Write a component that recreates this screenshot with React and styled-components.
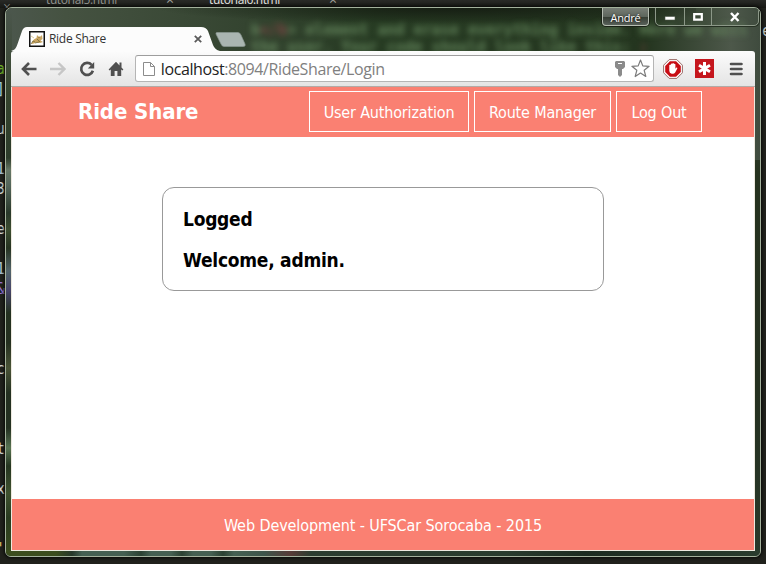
import React from "react";
import styled, { createGlobalStyle } from "styled-components";

const Global = createGlobalStyle`
  * { box-sizing: border-box; }
  html, body { margin: 0; padding: 0; overflow: hidden; background: #20211c; }
`;

const ui = `"DejaVu Sans Condensed", "DejaVu Sans", sans-serif`;
const segoe = `"Open Sans", "Noto Sans", sans-serif`;

const Desktop = styled.div`
  position: relative;
  width: 766px;
  height: 564px;
  overflow: hidden;
  background: #20211c;
`;

const EditorTabs = styled.div`
  display: flex;
  height: 8px;
  overflow: hidden;
  background: linear-gradient(#292a27, #171814);
  padding-left: 3px;
`;

const EditorTab = styled.div`
  display: flex;
  flex: none;
  align-items: center;
  justify-content: space-between;
  width: ${(p) => p.$width}px;
  height: 14px;
  margin-top: -7px;
  padding-left: ${(p) => p.$indent}px;
  font: 12px/14px ${segoe};
  letter-spacing: -0.4px;
  color: ${(p) => (p.$active ? "#e6e6e2" : "#92938e")};
`;

const EditorClose = styled.span`
  width: 10px;
  color: #a0a09a;
  font-size: 14px;
`;

const EditorLines = styled.div`
  padding-top: 51px;
  width: 12px;
  overflow: hidden;
  font: 15px/20px "DejaVu Sans Mono", monospace;
`;

const EditorLine = styled.div`
  height: 20px;
  margin-left: -4px;
  color: ${(p) => p.$color || "#d5d6d0"};
`;

const EditorOverflow = styled.div`
  position: absolute;
  left: 753px;
  top: 21px;
  font: 15px/20px "DejaVu Sans Mono", monospace;
  color: #bfc6c6;
`;

const Window = styled.div`
  position: absolute;
  left: 5px;
  top: 7px;
  width: 756px;
  height: 550px;
  border: 1px solid #a3b19c;
  border-radius: 7px 7px 6px 6px;
  padding: 0 5px 5px;
  background: linear-gradient(#485347 0, #3a4838 9%, #26321f 30%, #253020 70%, #29382a 100%);
  box-shadow: 0 0 3px 1px #080907;
  overflow: hidden;
`;

const Glass = styled.div`
  position: absolute;
  inset: 0;
  overflow: hidden;
  background: linear-gradient(90deg, #4c574d 0, #455241 60px, #344430 240px, #263a22 370px, #24351f 640px, #4d584a 725px, #3f4b3e 100%) top / 100% 152px no-repeat;
`;

const GlassShade = styled.div`
  height: 16px;
  margin-left: 90px;
  width: 600px;
  background: radial-gradient(ellipse 50% 100% at 60% 0, #161e13, transparent);
`;

const GlassText = styled.div`
  margin-top: ${(p) => p.$gap}px;
  padding-left: ${(p) => p.$indent}px;
  white-space: pre;
  font: bold 15px/17px "DejaVu Sans Mono", monospace;
  color: #6c9064;
  opacity: 0.85;
  filter: blur(3.2px);
  b { color: #8a4548; }
`;

const GlassEdge = styled.div`
  position: absolute;
  left: 0;
  top: 0;
  width: 6px;
  height: 100%;
  background: linear-gradient(#4c574d 0, #35442d 90px, #2d3c2b 150px, #667766 162px, #53655a 178px, #29382a 205px, #3c4d30 222px, #263321 240px, #52646a 263px, #47456a 282px, #243120 305px, #253020 335px, #4a5437 360px, #243021 385px, #243021 420px, #587453 440px, #253520 458px, #405330 485px, #293b20 510px, #3b4d1e 100%);
`;

const GlassBase = styled.div`
  position: absolute;
  bottom: 0;
  left: 0;
  width: 100%;
  height: 6px;
  background: linear-gradient(90deg, #3b4d1e 0, #3b4d1e 50px, #263729 66px, #456052 76px, #456052 118px, #2b4132 135px, #456052 145px, #456052 165px, #2b4132 176px, #456052 187px, #456052 205px, #2b4132 217px, #456052 228px, #3d554a 258px, #573b37 285px, #2b3c2f 305px, #293b2d 500px, #1c2b20 580px, #293b2d 100%);
`;

const TitleBar = styled.div`
  position: relative;
  display: flex;
  justify-content: space-between;
  height: 43px;
`;

const TabStrip = styled.div`
  display: flex;
  align-items: flex-end;
`;

const BrowserTab = styled.div`
  position: relative;
  display: flex;
  align-items: center;
  width: 206px;
  height: 24px;
  padding: 0 15px 0 18px;
  font: 12px/24px ${segoe};
  letter-spacing: -0.3px;
  color: #333;
`;

const TabShape = styled.svg`
  position: absolute;
  left: 0;
  top: 0;
`;

const Favicon = styled.svg`
  position: relative;
  margin-right: 4px;
`;

const TabTitle = styled.span`
  position: relative;
  flex: 1;
`;

const TabClose = styled.svg`
  position: relative;
`;

const NewTab = styled.svg`
  align-self: flex-end;
  margin: 0 0 4px -2px;
`;

const Caption = styled.div`
  display: flex;
  align-items: flex-start;
  gap: 6px;
  margin-right: -4px;
`;

const UserBadge = styled.div`
  width: 47px;
  height: 19px;
  margin-top: -1px;
  border: 1px solid #b5bdb1;
  border-top-color: #8b9489;
  border-radius: 0 0 4px 4px;
  box-shadow: 0 0 0 1px #182015;
  background: linear-gradient(#777d75 0, #5e665d 50%, #343c32 52%, #59615a 100%);
  color: #fff;
  text-align: center;
  font: 11px/19px ${segoe};
  letter-spacing: -0.2px;
  text-shadow: 0 0 2px #111;
`;

const WindowButtons = styled.div`
  display: flex;
  height: 19px;
  margin-top: -1px;
  border: 1px solid #8c9888;
  border-radius: 0 0 5px 5px;
  box-shadow: 0 0 0 1px #253022;
`;

const WindowButton = styled.div`
  display: flex;
  align-items: center;
  justify-content: center;
  width: ${(p) => p.$width}px;
  border-left: ${(p) => (p.$first ? "0" : "1px solid #8c9888")};
`;

const Toolbar = styled.div`
  position: relative;
  display: flex;
  align-items: center;
  height: 36px;
  padding: 0 10px 0 10px;
  border-radius: 3px 3px 0 0;
  border-bottom: 1px solid #b2aaa6;
  background: linear-gradient(#fcfcfc, #e4e4e4);
`;

const NavButtons = styled.div`
  display: flex;
  gap: 13px;
  width: 114px;
`;

const AddressBar = styled.div`
  display: flex;
  align-items: center;
  width: 520px;
  height: 27px;
  padding: 0 3px 0 7px;
  border: 1px solid #b5b5b5;
  border-top-color: #9e9e9e;
  border-radius: 3px;
  background: #fff;
`;

const Url = styled.span`
  flex: 1;
  padding-left: 6px;
  font: 16px/24px ${segoe};
  letter-spacing: -0.4px;
  color: #808080;
`;

const Host = styled.span`
  color: #222;
`;

const StarIcon = styled.svg`
  margin-left: 5px;
`;

const Extensions = styled.div`
  display: flex;
  align-items: center;
  gap: 12px;
  padding-left: 9px;
`;

const MenuIcon = styled.svg`
  margin-left: 2px;
`;

const Page = styled.div`
  position: relative;
  display: flex;
  flex-direction: column;
  height: 464px;
  border-right: 1px solid #ede9df;
  border-bottom: 1px solid #ede9df;
  border-left: 1px solid #ede9df;
  background: #fff;
  font-family: ${ui};
`;

const Header = styled.header`
  display: flex;
  align-items: flex-start;
  justify-content: space-between;
  height: 50px;
  padding: 4px 52px 0 66px;
  background: #fa8072;
  color: #fff;
`;

const Brand = styled.h1`
  margin: 0;
  font: bold 22px/41px ${ui};
  letter-spacing: -0.1px;
  white-space: nowrap;
`;

const Menu = styled.nav`
  display: flex;
  gap: 5px;
`;

const MenuLink = styled.a`
  width: ${(p) => p.$width}px;
  height: 41px;
  border: 1px solid #fff;
  text-align: center;
  font: 16px/41px ${ui};
  letter-spacing: -0.17px;
  white-space: nowrap;
`;

const Main = styled.main`
  flex: 1;
  padding-top: 50px;
`;

const Panel = styled.section`
  width: 442px;
  height: 104px;
  margin: 0 auto;
  padding: 19px 20px;
  border: 1px solid #999;
  border-radius: 12px;
`;

const Message = styled.h2`
  margin: 0 0 17px;
  font: bold 19px/24px ${ui};
  letter-spacing: -0.25px;
  color: #000;
`;

const Footer = styled.footer`
  height: 51px;
  background: #fa8072;
  color: #fff;
  text-align: center;
  font: 16px/53px ${ui};
  letter-spacing: -0.1px;
`;

const lines = [
  ["a", "#6fae28"], ["]", "#9cc9d8"], [""], ["u"], [""], ["1", "#a9bfcf"], ["3"], [""], ["e"], [""],
  ["1", "#a9bfcf"], ["&", "#9472cf"], [""], [""], [""], ["c"], [""], [""], [""], ["t"], [""], ["x"], [""], [""], ["'", "#d5bd62"],
];

function NavIcons() {
  return (
    <NavButtons>
      <svg width="16" height="18" viewBox="0 0 16 18" fill="none" stroke="#505050" strokeWidth="2.6">
        <path d="M15.5 9H2.5M8 3 2 9l6 6" />
      </svg>
      <svg width="16" height="18" viewBox="0 0 16 18" fill="none" stroke="#c6c6c6" strokeWidth="2.4">
        <path d="M0 9h13.5M8.5 3l6 6-6 6" />
      </svg>
      <svg width="16" height="18" viewBox="0 0 16 18">
        <path d="M12.6 4.8A6 6 0 1 0 13.9 10.8" fill="none" stroke="#505050" strokeWidth="2.7" />
        <path d="M15.2 2v6.6H8.8z" fill="#505050" />
      </svg>
      <svg width="16" height="18" viewBox="0 0 16 18" fill="#505050">
        <path d="M8 1.8 0.6 9.5l1 1.1 1.2-1.1V16h3.8v-5h2.8v5h3.8V9.5l1.2 1.1 1-1.1-1.9-2V2.5h-2v3z" />
      </svg>
    </NavButtons>
  );
}

export default function App() {
  return (
    <Desktop>
      <Global />
      <EditorTabs>
        <EditorClose>×</EditorClose>
        <EditorTab $width={163} $indent={33}>
          tutorial5.html <EditorClose>×</EditorClose>
        </EditorTab>
        <EditorTab $width={163} $indent={33} $active>
          tutorial6.html <EditorClose>×</EditorClose>
        </EditorTab>
      </EditorTabs>
      <EditorLines>
        {lines.map(([t, c], i) => (
          <EditorLine key={i} $color={c}>{t}</EditorLine>
        ))}
      </EditorLines>
      <EditorOverflow>ne</EditorOverflow>

      <Window>
        <Glass>
          <GlassShade />
          <GlassText $gap={-2} $indent={245}>{"b"}<b>{"</b"}</b>{">"}{" element and erase everything inside. Here we will"}</GlassText>
          <GlassText $gap={0} $indent={236}>{" the user. Your code should look like this: "}<b>:</b></GlassText>
          <GlassEdge />
          <GlassBase />
        </Glass>

        <TitleBar>
          <TabStrip>
            <BrowserTab>
              <TabShape width="212" height="24" viewBox="0 0 212 24">
                <path d="M0 24C4 23 5 21 6.500 17L11 4Q12.500 0 16 0H190Q195 0 197 4L202 18Q204 23 209 24Z" fill="#fcfcfc" />
              </TabShape>
              <Favicon width="16" height="16" viewBox="0 0 16 16">
                <path d="M.75.75h14.500v14.500H.75z" fill="#fff" stroke="#111" strokeWidth="1.500" />
                <path d="M2.500 13l1-3 2-2 2-1 .5-3 1.500 1.500h2L13 4l.5 4-2 1.500L14 11l-3 1-4-.5-2 1z" fill="#c9a561" />
                <path d="M2 13l2-3 2 1M8 8l3 3M9.500 6.500h1M6 12l4-1" fill="none" stroke="#75683b" strokeWidth=".8" />
                <path d="M2 5l3 2" stroke="#e0d0a0" />
              </Favicon>
              <TabTitle>Ride Share</TabTitle>
              <TabClose width="8" height="8" viewBox="0 0 8 8" stroke="#5a5a5a" strokeWidth="1.800">
                <path d="M.8.8l6.400 6.400M7.200.8.8 7.200" />
              </TabClose>
            </BrowserTab>
            <NewTab width="31" height="15" viewBox="0 0 31 15">
              <path d="M2 .5H23Q25 .5 26 3l4 9Q31 14.500 28 14.500H9Q7 14.500 6 12L1 2Q.5.5 2 .5Z" fill="#aab5b1" stroke="#8a9690" strokeWidth=".7" />
            </NewTab>
          </TabStrip>
          <Caption>
            <UserBadge>André</UserBadge>
            <WindowButtons>
              <WindowButton $width={28} $first>
                <svg width="12" height="10"><path d="M1 4.500h10v3.500H1z" fill="#fff" stroke="#4b5548" strokeWidth=".6" /></svg>
              </WindowButton>
              <WindowButton $width={27}>
                <svg width="12" height="10"><path d="M2.200 2.200h7.600v5.400H2.200z" fill="none" stroke="#fff" strokeWidth="2.200" /></svg>
              </WindowButton>
              <WindowButton $width={47}>
                <svg width="12" height="10" stroke="#fff" strokeWidth="2.400"><path d="M2 1l7.500 8M9.500 1 2 9" /></svg>
              </WindowButton>
            </WindowButtons>
          </Caption>
        </TitleBar>

        <Toolbar>
          <NavIcons />
          <AddressBar>
            <svg width="12" height="16" viewBox="0 0 12 16" fill="#fff" stroke="#8c8c8c">
              <path d="M.5 1.500h7l4 4v9H.5zM7.500 1.500v4h4" />
            </svg>
            <Url><Host>localhost</Host>:8094/RideShare/Login</Url>
            <svg width="12" height="16" viewBox="0 0 12 16" fill="#8b8b8b">
              <path d="M2 0h8l1 1v5L9 8H8v6l-2 2-2-2V8H3L1 6V1zM4 2v1h4V2z" fillRule="evenodd" />
            </svg>
            <StarIcon width="19" height="19" viewBox="0 0 19 19" fill="#fff" stroke="#7a7a7a" strokeWidth="1.200" strokeLinejoin="round">
              <path d="M9.500 1l2.300 5.900 6.300.4-4.900 4 1.600 6.200-5.300-3.400-5.300 3.400 1.600-6.200-4.900-4 6.300-.4z" />
            </StarIcon>
          </AddressBar>
          <Extensions>
            <svg width="20" height="20" viewBox="0 0 20 20">
              <path d="M6.200.6h7.600l5.600 5.600v7.600l-5.600 5.600H6.200L.6 13.800V6.200z" fill="#fff" stroke="#8d5a55" strokeWidth=".9" />
              <path d="M6.900 2.200h6.200l4.700 4.700v6.200l-4.700 4.700H6.900l-4.700-4.700V6.900z" fill="#c80d14" />
              <path d="M6.300 9.300V6.100q.8-.9 1.500 0V5q.8-.9 1.500 0v-.6q.8-.8 1.600 0V5q.8-.7 1.500.2v4.600l1-1.200q1.100-.2.900.8l-2.100 4.200q-.5 1.100-1.900 1.100H8.700q-2.400-.7-2.400-3z" fill="#fff" />
            </svg>
            <svg width="19" height="19" viewBox="0 0 19 19">
              <path d="M0 0h19v19H0z" fill="#c5161d" />
              <path d="M9.500 3v13M4 6.300l11 6.400M15 6.300 4 12.700" stroke="#fff" strokeWidth="3" />
            </svg>
            <MenuIcon width="17" height="14" viewBox="0 0 17 14" stroke="#505050" strokeWidth="2.600" strokeLinecap="round">
              <path d="M3 2h10.500M3 7h10.500M3 12h10.500" />
            </MenuIcon>
          </Extensions>
        </Toolbar>

        <Page>
          <Header>
            <Brand>Ride Share</Brand>
            <Menu>
              <MenuLink $width={160}>User Authorization</MenuLink>
              <MenuLink $width={137}>Route Manager</MenuLink>
              <MenuLink $width={86}>Log Out</MenuLink>
            </Menu>
          </Header>
          <Main>
            <Panel>
              <Message>Logged</Message>
              <Message>Welcome, admin.</Message>
            </Panel>
          </Main>
          <Footer>Web Development - UFSCar Sorocaba - 2015</Footer>
        </Page>
      </Window>
    </Desktop>
  );
}
